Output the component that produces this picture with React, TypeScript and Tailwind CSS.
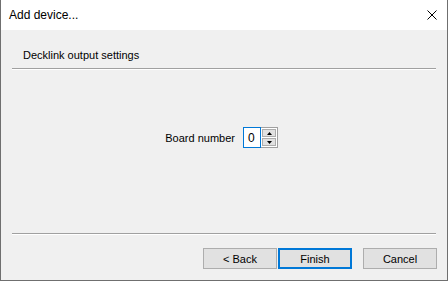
import React from "react";

export default function App() {
  const font = { fontFamily: '"Liberation Sans", Arial, sans-serif' };
  return (
    <div
      className="w-[448px] h-[281px] flex flex-col border-x border-b border-[#6f6f6f] bg-[#f0f0f0] text-[11px] text-black"
      style={font}
    >
      <div className="h-[30px] bg-white flex items-center justify-between pl-[8px] pr-[10px]">
        <span className="text-[12px] leading-[16px]">Add device...</span>
        <svg width="10" height="10" viewBox="0 0 10 10">
          <path d="M0.5 0.5 L9.5 9.5 M9.5 0.5 L0.5 9.5" stroke="#000" strokeWidth="1" />
        </svg>
      </div>
      <div className="flex-1 flex flex-col">
        <div className="pt-[17px] pl-[22px] leading-[16px]">Decklink output settings</div>
        <div className="mt-[5px] mx-[11px] border-t border-b border-t-[#a0a0a0] border-b-white" />
        <div className="mt-[57px] flex items-center h-[21px]">
          <div className="w-[242px] text-right pr-[8px] leading-[16px]">Board number</div>
          <div className="flex h-[21px]">
            <div className="w-[18px] h-[21px] border border-[#0078d7] bg-white flex items-center pl-[4px] leading-[16px] text-[12px]">
              0
            </div>
            <div className="w-[17px] h-[21px] bg-white border border-l-0 border-[#a0a0a0] flex flex-col p-[1px] gap-[1px]">
              <div className="flex-1 bg-[#e1e1e1] border border-[#adadad] flex items-center justify-center">
                <svg width="5" height="3" viewBox="0 0 5 3">
                  <path d="M2.5 0 L5 3 L0 3 Z" fill="#000" />
                </svg>
              </div>
              <div className="flex-1 bg-[#e1e1e1] border border-[#adadad] flex items-center justify-center">
                <svg width="5" height="3" viewBox="0 0 5 3">
                  <path d="M0 0 L5 0 L2.5 3 Z" fill="#000" />
                </svg>
              </div>
            </div>
          </div>
        </div>
        <div className="flex-1" />
        <div className="mx-[11px] border-t border-b border-t-[#a0a0a0] border-b-white" />
        <div className="mt-[13px] mb-[11px] flex h-[21px] pl-[202px]">
          <button className="w-[74px] h-[21px] bg-[#e1e1e1] border border-[#adadad] leading-[16px]">
            &lt; Back
          </button>
          <button className="ml-[1px] w-[74px] h-[21px] bg-[#e1e1e1] border-2 border-[#0078d7] leading-[16px]">
            Finish
          </button>
          <button className="ml-[11px] w-[74px] h-[21px] bg-[#e1e1e1] border border-[#adadad] leading-[16px]">
            Cancel
          </button>
        </div>
      </div>
    </div>
  );
}
